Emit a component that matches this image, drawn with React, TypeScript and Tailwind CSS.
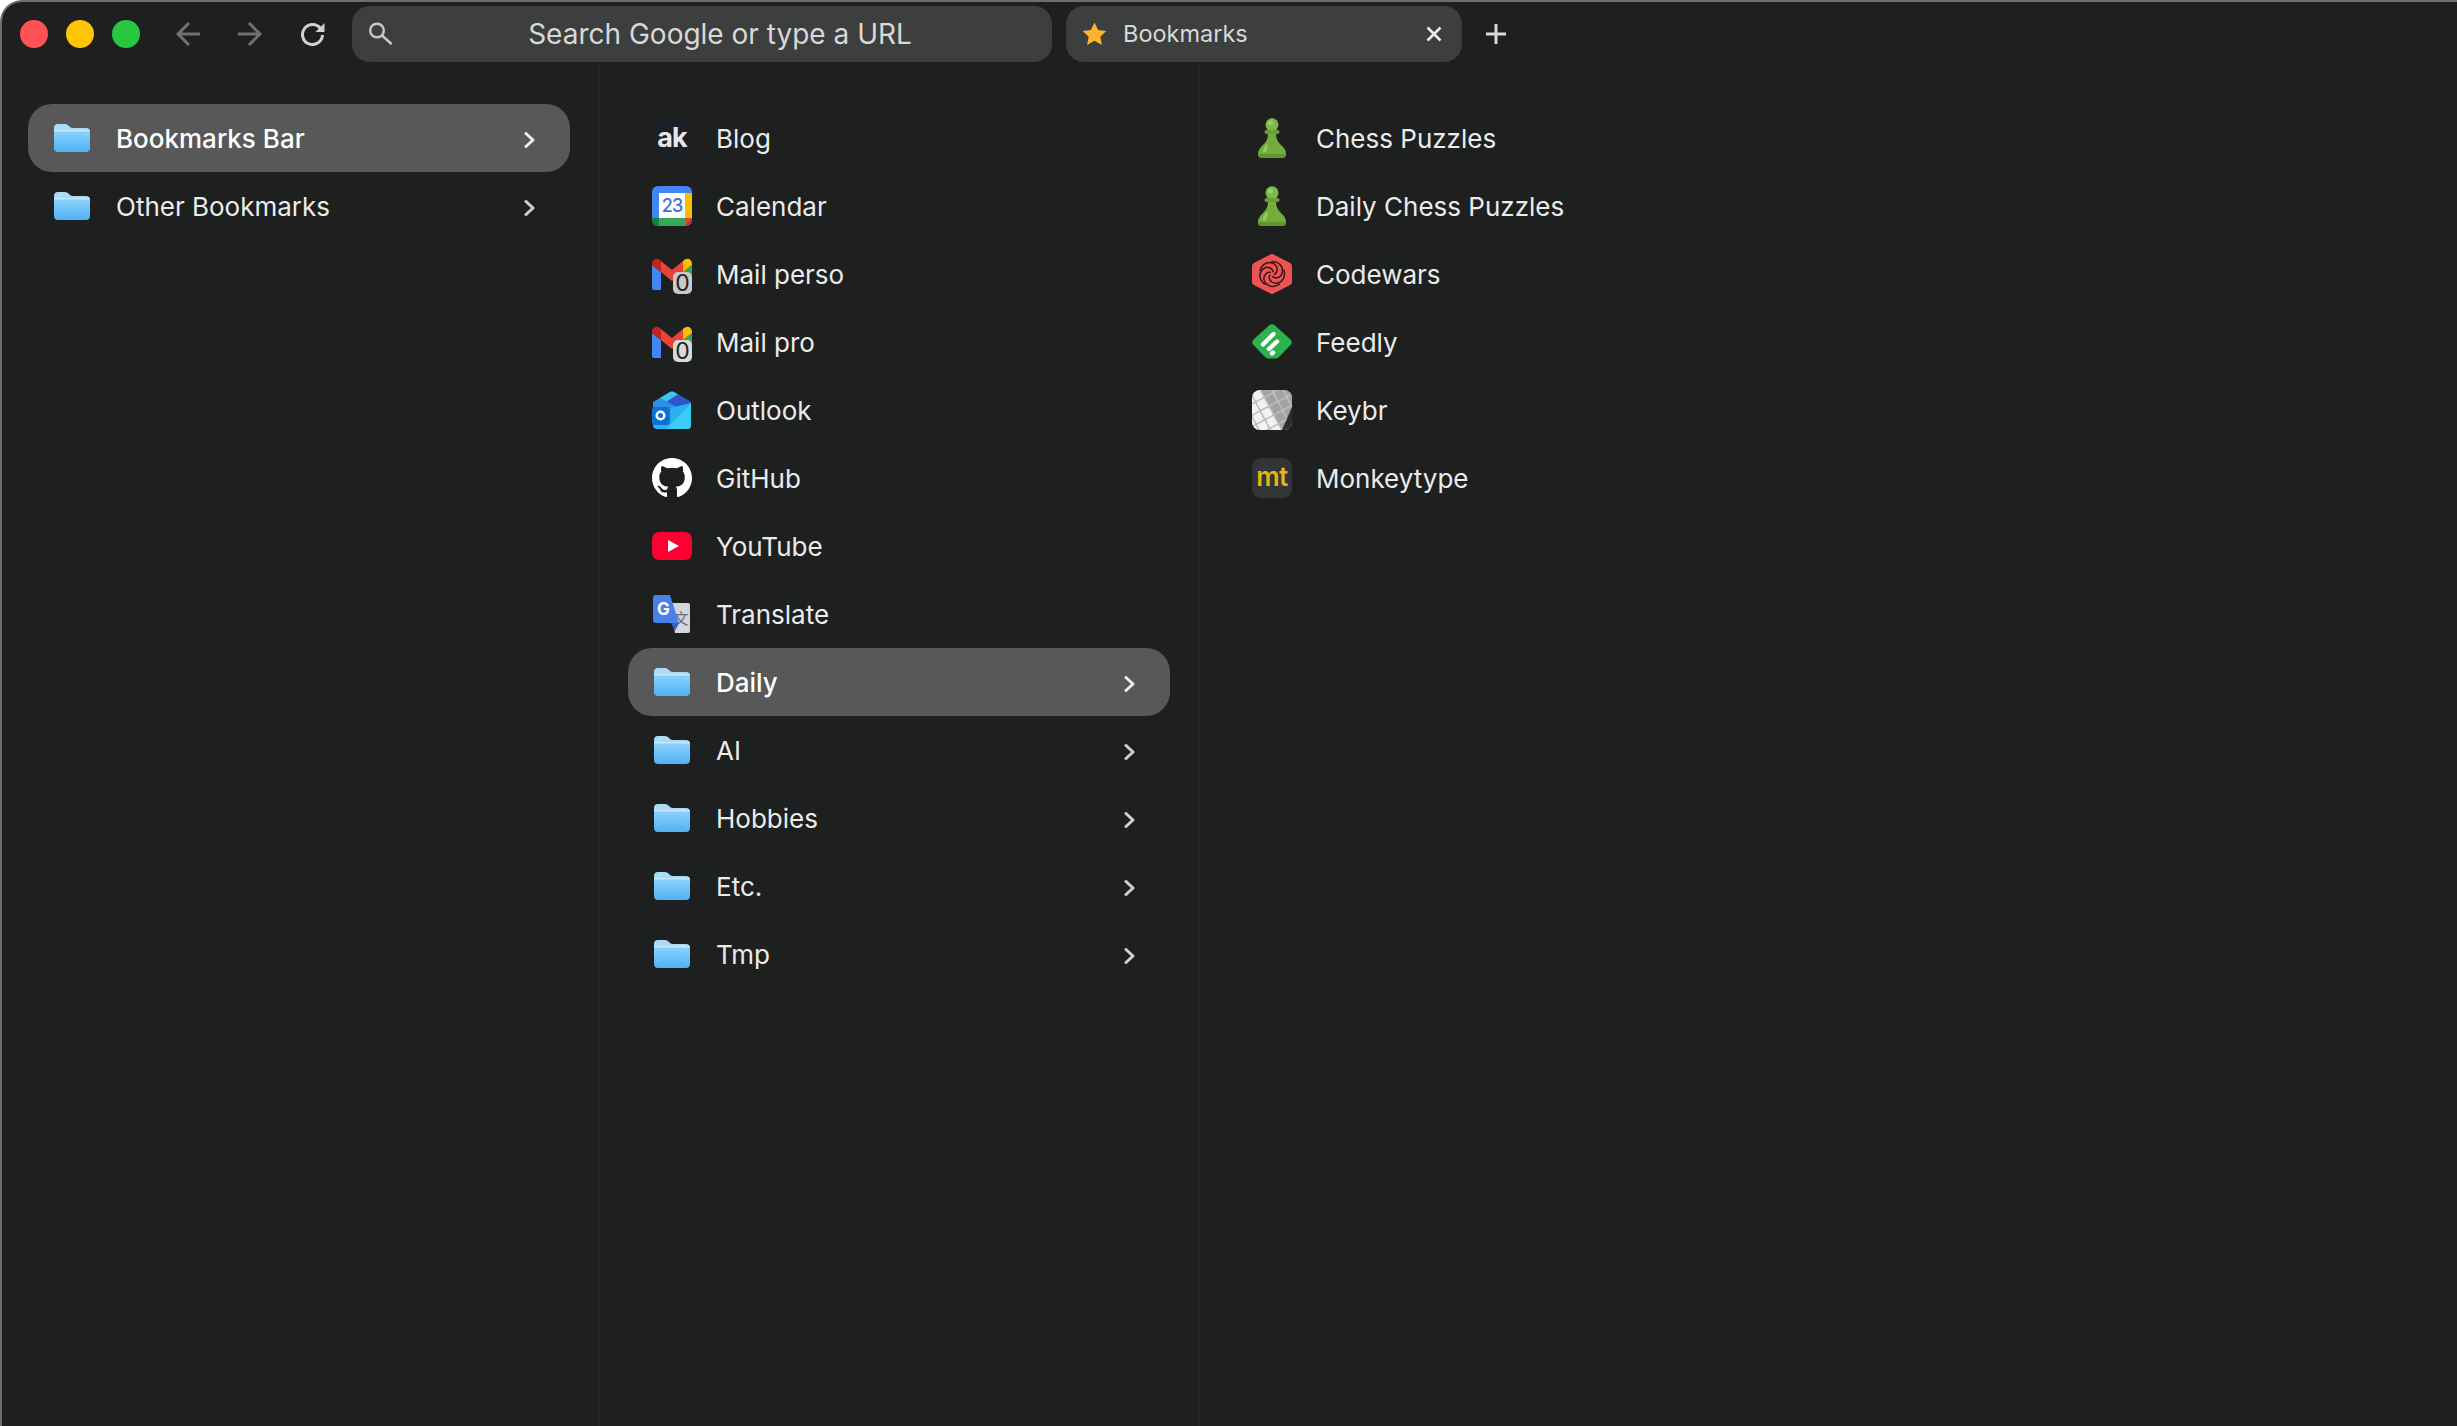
import { ReactNode } from "react";

function Folder() {
    return (
        <svg width="36" height="28" viewBox="0 0 36 28">
            <defs>
                <linearGradient id="folderBody" x1="0" y1="0" x2="0" y2="1">
                    <stop offset="0" stopColor="#8fd3fb" />
                    <stop offset="1" stopColor="#4fb2f5" />
                </linearGradient>
            </defs>
            <path d="M0 4a4 4 0 0 1 4-4h7c2 0 3 1 4 2s2 2 4 2h13a4 4 0 0 1 4 4v3H0z" fill="#a9dcf8" />
            <path d="M0 8.500a2.500 2.500 0 0 1 2.500-2.500h31a2.500 2.500 0 0 1 2.500 2.500V24a4 4 0 0 1-4 4H4a4 4 0 0 1-4-4z" fill="url(#folderBody)" />
            <rect x="0" y="6" width="36" height="1.500" rx="0.700" fill="#c3e9fd" />
        </svg>
    );
}

function Chevron() {
    return (
        <svg width="11" height="16" viewBox="0 0 11 16" fill="none" stroke="currentColor" strokeWidth="3" strokeLinecap="round" strokeLinejoin="round">
            <path d="M2 1.500L9 8l-7 6.500" />
        </svg>
    );
}

function AkIcon() {
    return (
        <div className="w-10 h-10 rounded-full bg-[#1c2026] flex items-center justify-center font-bold text-[27px] leading-none pb-[2px] tracking-[-1px] text-[#e8e8e8]">ak</div>
    );
}

function CalendarIcon() {
    return (
        <svg width="40" height="40" viewBox="0 0 40 40">
            <rect width="40" height="40" rx="6" fill="#4285f4" />
            <path d="M33 7h7v25h-7z" fill="#fbbc04" />
            <path d="M7 32h26v8H6a6 6 0 0 1-6-6v-2z" fill="#34a853" />
            <path d="M0 32h7v8H6a6 6 0 0 1-6-6z" fill="#188038" />
            <path d="M33 32h7l-7 8z" fill="#ea4335" />
            <path d="M33 40l7-8v2a6 6 0 0 1-6 6z" fill="#c5362a" />
            <rect x="7" y="7" width="26" height="25" fill="#fff" />
            <text x="20" y="26" textAnchor="middle" fontFamily="Inter, sans-serif" fontSize="18" fontWeight="500" fill="#3b70d6" letterSpacing="-1">23</text>
        </svg>
    );
}

function GmailIcon({ light }: { light?: boolean }) {
    return (
        <div className="relative w-10 h-10">
            <svg width="40" height="40" viewBox="0 0 40 40">
                <path d="M0 11v23a2 2 0 0 0 2 2h7V18z" fill="#4285f4" />
                <path d="M31 18v18h7a2 2 0 0 0 2-2V11z" fill="#34a853" />
                <path d="M31 7v11l9-7v-1c0-5-5-7-9-3z" fill="#fbbc04" />
                <path d="M9 18V7l11 9 11-9v11l-11 9z" fill="#ea4335" />
                <path d="M0 10v1l9 7V7C6 3 0 5 0 10z" fill="#c5221f" />
            </svg>
            <div className={`absolute right-0 bottom-0 w-[19px] h-[22px] rounded-[5px] flex items-center justify-center text-[23px] leading-none text-[#1f2120] ${light ? "bg-[#d6dbd8]" : "bg-[#c9c9c9]"}`}>0</div>
        </div>
    );
}

function OutlookIcon() {
    return (
        <svg width="40" height="40" viewBox="0 0 40 40">
            <path d="M1 12L18 2a4 4 0 0 1 4 0l17 10v14H1z" fill="#2a8fe6" />
            <path d="M8 8l10-6a4 4 0 0 1 4 0l4 2.500-11 7z" fill="#3ec4f0" />
            <path d="M15 11.500L26 4.500 39 12v6l-7 3z" fill="#2f55cc" />
            <path d="M1 22l38-9v22a4 4 0 0 1-4 4H5a4 4 0 0 1-4-4z" fill="#29b1f0" />
            <path d="M39 14v21a4 4 0 0 1-4 4H14z" fill="#3accf5" />
            <rect x="0" y="17" width="18" height="18" rx="3" fill="#0f6fd6" />
            <circle cx="8.500" cy="25.500" r="3.800" fill="none" stroke="#fff" strokeWidth="2.500" />
        </svg>
    );
}

function GithubIcon() {
    return (
        <svg width="40" height="40" viewBox="0 0 16 16" fill="#fff">
            <path d="M8 0C3.580 0 0 3.580 0 8c0 3.540 2.290 6.530 5.470 7.590.4.070.55-.17.55-.38 0-.19-.01-.82-.01-1.490-2.010.37-2.530-.49-2.690-.94-.09-.23-.48-.94-.82-1.130-.28-.15-.68-.52-.01-.53.63-.01 1.080.58 1.230.82.72 1.210 1.870.87 2.330.66.07-.52.28-.87.51-1.070-1.780-.2-3.640-.89-3.640-3.950 0-.87.31-1.590.82-2.150-.08-.2-.36-1.020.08-2.120 0 0 .67-.21 2.200.82.64-.18 1.320-.27 2-.27.68 0 1.360.09 2 .27 1.530-1.040 2.200-.82 2.200-.82.44 1.100.16 1.920.08 2.120.51.56.82 1.270.82 2.150 0 3.070-1.870 3.750-3.650 3.950.29.25.54.73.54 1.480 0 1.070-.01 1.930-.01 2.200 0 .21.15.46.55.38A8.013 8.013 0 0016 8c0-4.420-3.580-8-8-8z" />
        </svg>
    );
}

function YoutubeIcon() {
    return (
        <svg width="40" height="28" viewBox="0 0 40 28">
            <rect width="40" height="28" rx="7" fill="#ff0033" />
            <path d="M16 8l11 6-11 6z" fill="#fff" />
        </svg>
    );
}

function TranslateIcon() {
    return (
        <svg width="40" height="40" viewBox="0 0 40 40">
            <path d="M17 9h19a2 2 0 0 1 2 2v26a2 2 0 0 1-2 2H23z" fill="#d4d6da" />
            <text x="29" y="30" textAnchor="middle" fontFamily="'Noto Sans CJK SC', sans-serif" fontSize="15" fill="#6c7078">文</text>
            <path d="M4 1h14l9 28H4a3 3 0 0 1-3-3V4a3 3 0 0 1 3-3z" fill="#4a80ea" />
            <path d="M19 29h8l-4 8z" fill="#3565c4" />
            <text x="11.500" y="21" textAnchor="middle" fontFamily="Inter, sans-serif" fontSize="17" fontWeight="700" fill="#fff">G</text>
        </svg>
    );
}

function PawnIcon() {
    return (
        <svg width="28" height="40" viewBox="0 0 28 40">
            <circle cx="14" cy="6.800" r="6.500" fill="#7fb84a" />
            <path d="M6.500 14a2 2 0 0 1 2-2h11a2 2 0 0 1 0 4h-11a2 2 0 0 1-2-2z" fill="#689f38" />
            <path d="M10 16h8c0 5 2 8 5 11 3 3 5 5 5 9 0 3-2 4-5 4H5c-3 0-5-1-5-4 0-4 2-6 5-9 3-3 5-6 5-11z" fill="#75ad3d" />
            <path d="M8 27c-2 2-3 4-3 7 0 1 2 1 3 0 1-2 2-5 2-8z" fill="#94cb5c" />
            <path d="M0 36c0 3 2 4 5 4h18c3 0 5-1 5-4z" fill="#5f962e" />
            <circle cx="12.500" cy="5" r="2.500" fill="#9bd062" />
        </svg>
    );
}

function CodewarsIcon() {
    return (
        <svg width="40" height="40" viewBox="0 0 40 40">
            <polygon points="20,3.500 36.500,12 36.500,28 20,36.500 3.500,28 3.500,12" fill="#ed5353" stroke="#ed5353" strokeWidth="7" strokeLinejoin="round" />
            <g fill="none" stroke="#3a1518" strokeWidth="1.500" strokeLinecap="round">
                {[0, 72, 144, 216, 288].map((deg) => (
                    <path key={deg} d="M20 7.500C27 7.500 32 13 30 19.500C28.500 24 23 25 20.500 22.500" transform={`rotate(${deg} 20 20)`} />
                ))}
            </g>
        </svg>
    );
}

function FeedlyIcon() {
    return (
        <svg width="40" height="36" viewBox="0 0 40 36">
            <path d="M17 1.500a4 4 0 0 1 6 0l15.500 14a4 4 0 0 1 0 5.500L27 33a4 4 0 0 1-3 1.500H16A4 4 0 0 1 13 33L1.500 21a4 4 0 0 1 0-5.500z" fill="#2bb24c" />
            <g stroke="#fff" strokeWidth="4.400" strokeLinecap="round">
                <path d="M21.500 10L11 20.500" />
                <path d="M25 17.500l-8 7.500" />
                <path d="M20 29.500l1-1" />
            </g>
        </svg>
    );
}

function KeybrIcon() {
    const keys = [];
    for (let row = 0; row < 5; row++) {
        for (let col = 0; col < 6; col++) {
            keys.push(<rect key={`${row}-${col}`} x={col * 10 - 10} y={row * 10 - 4} width="8.500" height="8.500" rx="1" fill={col < 3 ? "#f2f2f2" : "#a3a3a3"} />);
        }
    }
    return (
        <div className="w-10 h-10 rounded-[8px] overflow-hidden bg-[#bdbdbd]">
            <svg width="40" height="40" viewBox="0 0 40 40">
                <g transform="rotate(-28 20 20)">{keys}</g>
                <path d="M40 17v23h-10z" fill="#2b2c2c" />
            </svg>
        </div>
    );
}

function MonkeyIcon() {
    return (
        <div className="w-10 h-10 rounded-[9px] bg-[#323437] flex items-center justify-center font-semibold text-[26px] leading-none pb-[3px] tracking-[-0.5px] text-[#e2b714]">mt</div>
    );
}

type Item = { name: string; icon?: ReactNode; folder?: boolean; active?: boolean };

function Row({ item }: { item: Item }) {
    return (
        <div className={`h-[68px] flex items-center pl-6 pr-[35px] rounded-[24px] ${item.active ? "bg-[#585859] text-white font-medium" : "text-[#ebebeb]"}`}>
            <div className="w-10 h-10 flex items-center justify-center shrink-0">
                {item.folder ? <Folder /> : item.icon}
            </div>
            <span className="ml-6 text-[26px] leading-none pt-[1px] flex-1">{item.name}</span>
            {item.folder && (
                <span className={`mt-[3px] ${item.active ? "text-[#eeeeee]" : "text-[#d0d0d0]"}`}>
                    <Chevron />
                </span>
            )}
        </div>
    );
}

const col1: Item[] = [
    { name: "Bookmarks Bar", folder: true, active: true },
    { name: "Other Bookmarks", folder: true },
];

const col2: Item[] = [
    { name: "Blog", icon: <AkIcon /> },
    { name: "Calendar", icon: <CalendarIcon /> },
    { name: "Mail perso", icon: <GmailIcon /> },
    { name: "Mail pro", icon: <GmailIcon light /> },
    { name: "Outlook", icon: <OutlookIcon /> },
    { name: "GitHub", icon: <GithubIcon /> },
    { name: "YouTube", icon: <YoutubeIcon /> },
    { name: "Translate", icon: <TranslateIcon /> },
    { name: "Daily", folder: true, active: true },
    { name: "AI", folder: true },
    { name: "Hobbies", folder: true },
    { name: "Etc.", folder: true },
    { name: "Tmp", folder: true },
];

const col3: Item[] = [
    { name: "Chess Puzzles", icon: <PawnIcon /> },
    { name: "Daily Chess Puzzles", icon: <PawnIcon /> },
    { name: "Codewars", icon: <CodewarsIcon /> },
    { name: "Feedly", icon: <FeedlyIcon /> },
    { name: "Keybr", icon: <KeybrIcon /> },
    { name: "Monkeytype", icon: <MonkeyIcon /> },
];

export default function App() {
    return (
        <div className="w-[2457px] h-[1426px] bg-white overflow-hidden font-['Inter',sans-serif]">
            <div className="w-full h-full bg-[#1e2020] rounded-tl-[22px] border-t-2 border-l-2 border-[#6d6e6e] flex flex-col">
                <div className="h-16 shrink-0 flex items-center">
                    <div className="ml-[18px] flex gap-[18px]">
                        <div className="w-7 h-7 rounded-full bg-[#ff5257]"></div>
                        <div className="w-7 h-7 rounded-full bg-[#ffc502]"></div>
                        <div className="w-7 h-7 rounded-full bg-[#27c840]"></div>
                    </div>
                    <svg className="ml-9" width="24" height="24" viewBox="0 0 24 24" fill="none" stroke="#6f7070" strokeWidth="3">
                        <path d="M24 12H2M13 1L2 12l11 11" />
                    </svg>
                    <svg className="ml-[38px]" width="24" height="24" viewBox="0 0 24 24" fill="none" stroke="#6f7070" strokeWidth="3">
                        <path d="M0 12h22M11 1l11 11-11 11" />
                    </svg>
                    <svg className="ml-[38px]" width="25" height="24" viewBox="0 0 25 24" fill="none" stroke="#d0d0d0" strokeWidth="3">
                        <path d="M20.500 6.500A10 10 0 1 0 22.500 13" />
                        <path d="M24.500 1v9h-9z" fill="#d0d0d0" strokeWidth="0" />
                    </svg>
                    <div className="ml-[27px] w-[700px] h-14 rounded-[18px] bg-[#3d3e3e] flex items-center pl-4 pr-1">
                        <svg width="24" height="24" viewBox="0 0 24 24" fill="none" stroke="#c8c8c8" strokeWidth="2.400" strokeLinecap="round">
                            <circle cx="9" cy="8.500" r="6.800" />
                            <path d="M14 13.500l9 8" />
                        </svg>
                        <span className="flex-1 text-center text-[#d8d8d8] text-[28px] leading-none">Search Google or type a URL</span>
                    </div>
                    <div className="ml-[14px] w-[396px] h-14 rounded-[18px] bg-[#3d3e3e] flex items-center pl-4 pr-5">
                        <svg width="25" height="24" viewBox="0 0 25 24">
                            <path d="M12.500 0.500l3.600 7.500 8.200 1-6 5.700 1.600 8.200-7.400-4.100-7.400 4.100 1.600-8.200-6-5.700 8.200-1z" fill="#fdb32c" />
                        </svg>
                        <span className="ml-4 flex-1 text-[#d8d8d8] text-[23.5px] leading-none">Bookmarks</span>
                        <svg width="16" height="16" viewBox="0 0 16 16" stroke="#ececec" strokeWidth="2.600">
                            <path d="M1.500 1.500l13 13M14.500 1.500l-13 13" />
                        </svg>
                    </div>
                    <svg className="ml-6" width="20" height="20" viewBox="0 0 20 20" stroke="#d8d8d8" strokeWidth="3">
                        <path d="M10 0v20M0 10h20" />
                    </svg>
                </div>
                <div className="flex-1 flex min-h-0">
                    <div className="w-[598px] border-r-2 border-[#262828] pl-[26px] pr-7 pt-[38px]">
                        {col1.map((item) => <Row key={item.name} item={item} />)}
                    </div>
                    <div className="w-[600px] border-r-2 border-[#262828] px-7 pt-[38px]">
                        {col2.map((item) => <Row key={item.name} item={item} />)}
                    </div>
                    <div className="flex-1 px-7 pt-[38px]">
                        {col3.map((item) => <Row key={item.name} item={item} />)}
                    </div>
                </div>
            </div>
        </div>
    );
}
